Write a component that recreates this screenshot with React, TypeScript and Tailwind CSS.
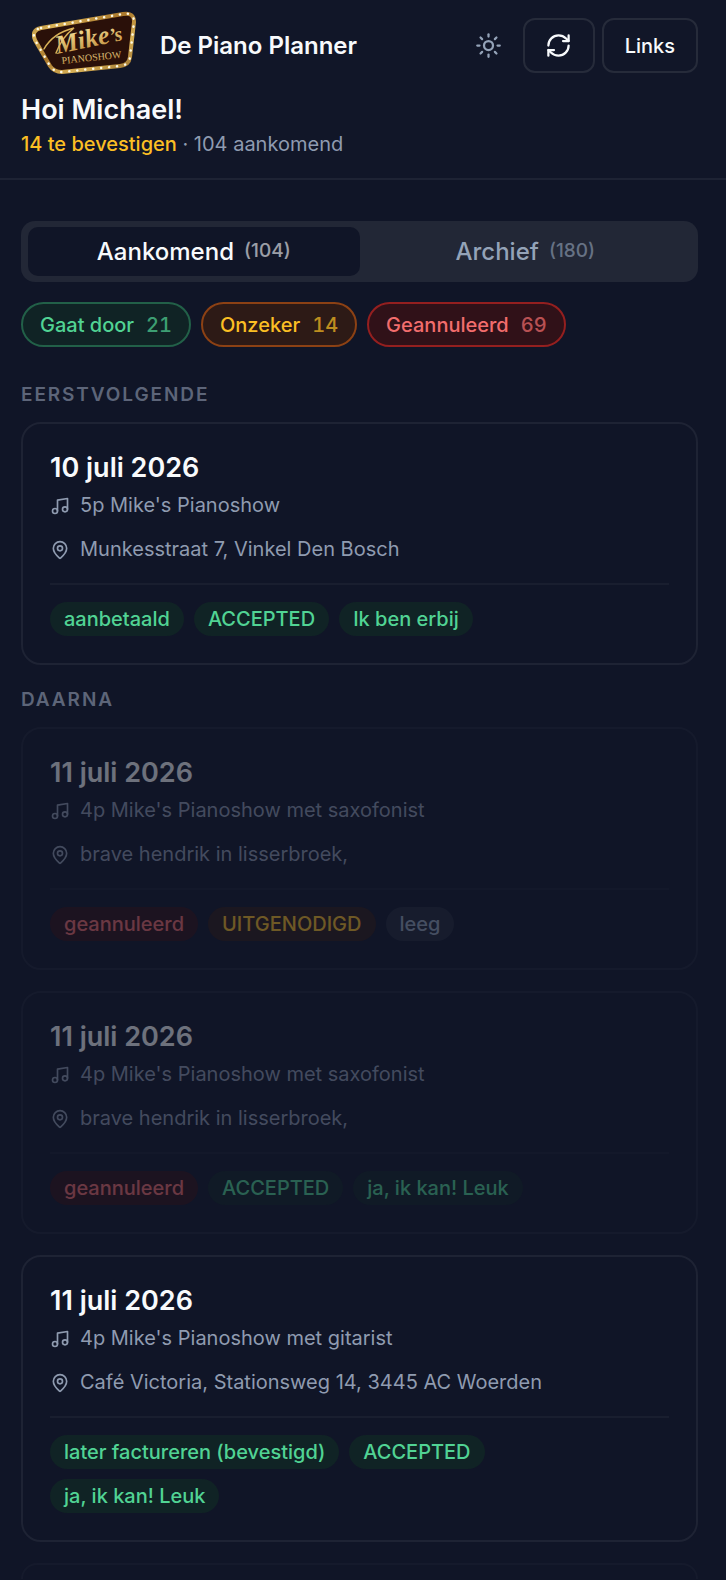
import React, { useState } from 'react'
import { MapPin, Music, RefreshCw, Sun } from 'lucide-react'
import { clsx } from 'clsx'

type Tone = 'green' | 'amber' | 'red' | 'gray'

interface Tag {
  label: string
  tone: Tone
}

interface Gig {
  id: number
  date: string
  show: string
  location: string
  tags: Tag[]
  cancelled?: boolean
}

const gigs: Gig[] = [
  {
    id: 1,
    date: '10 juli 2026',
    show: "5p Mike's Pianoshow",
    location: 'Munkesstraat 7, Vinkel Den Bosch',
    tags: [
      { label: 'aanbetaald', tone: 'green' },
      { label: 'ACCEPTED', tone: 'green' },
      { label: 'Ik ben erbij', tone: 'green' },
    ],
  },
  {
    id: 2,
    date: '11 juli 2026',
    show: "4p Mike's Pianoshow met saxofonist",
    location: 'brave hendrik in lisserbroek,',
    cancelled: true,
    tags: [
      { label: 'geannuleerd', tone: 'red' },
      { label: 'UITGENODIGD', tone: 'amber' },
      { label: 'leeg', tone: 'gray' },
    ],
  },
  {
    id: 3,
    date: '11 juli 2026',
    show: "4p Mike's Pianoshow met saxofonist",
    location: 'brave hendrik in lisserbroek,',
    cancelled: true,
    tags: [
      { label: 'geannuleerd', tone: 'red' },
      { label: 'ACCEPTED', tone: 'green' },
      { label: 'ja, ik kan! Leuk', tone: 'green' },
    ],
  },
  {
    id: 4,
    date: '11 juli 2026',
    show: "4p Mike's Pianoshow met gitarist",
    location: 'Café Victoria, Stationsweg 14, 3445 AC Woerden',
    tags: [
      { label: 'later factureren (bevestigd)', tone: 'green' },
      { label: 'ACCEPTED', tone: 'green' },
      { label: 'ja, ik kan! Leuk', tone: 'green' },
    ],
  },
]

const tagTones: Record<Tone, string> = {
  green: 'bg-[#102325] text-[#51d394]',
  amber: 'bg-[#2d1a16] text-[#fbbf24]',
  red: 'bg-[#301118] text-[#f26d6d]',
  gray: 'bg-[#222838] text-[#94a3b8]',
}

const filters = [
  { label: 'Gaat door', count: 21, style: 'border-[#226048] bg-[#102325] text-[#51d394]' },
  { label: 'Onzeker', count: 14, style: 'border-[#8c4114] bg-[#2d1a16] text-[#fbbf24]' },
  { label: 'Geannuleerd', count: 69, style: 'border-[#941f1f] bg-[#301118] text-[#f26d6d]' },
]

const tabs = [
  { id: 'upcoming', label: 'Aankomend', count: 104 },
  { id: 'archive', label: 'Archief', count: 180 },
]

const signShape = 'M9 17 L91 3 Q102 1 102 11 L98 46 Q97 54 88 55 L30 61 Q22 61 18 55 L3 29 Q-1 19 9 17 Z'

function Logo() {
  return (
    <svg width="104" height="69" viewBox="0 0 104 69" role="img" aria-label="Mike's Pianoshow">
      <defs>
        <linearGradient id="gold" x1="0" y1="0" x2="1" y2="1">
          <stop offset="0" stopColor="#8a6425" />
          <stop offset="0.2" stopColor="#d9b257" />
          <stop offset="0.45" stopColor="#a9772b" />
          <stop offset="0.7" stopColor="#d9b257" />
          <stop offset="1" stopColor="#94692a" />
        </linearGradient>
        <linearGradient id="letters" x1="0" y1="0" x2="0" y2="1">
          <stop offset="0" stopColor="#f8e7a0" />
          <stop offset="1" stopColor="#c08b38" />
        </linearGradient>
      </defs>
      <path d={signShape} fill="#2a1009" stroke="url(#gold)" strokeWidth="4" />
      <path d={signShape} fill="none" stroke="#fffbe8" strokeWidth="2.5" strokeLinecap="round" strokeDasharray="0.1 7.9" />
      {/* swash that leads into the name */}
      <path d="M12 38 Q21 22 42 17 Q30 26 24 42" fill="none" stroke="#d9b257" strokeWidth="1.5" strokeLinecap="round" />
      <text transform="rotate(-12 25 43)" x="25" y="43" fontSize="26" fontStyle="italic" fill="url(#letters)" className="font-['Liberation_Serif',serif]">
        Mike<tspan fontSize="20">’s</tspan>
      </text>
      <text transform="rotate(-6 30 53)" x="30" y="53" fontSize="10" fontWeight="400" fill="url(#letters)" className="font-['Liberation_Serif',serif]">
        PIANOSHOW
      </text>
    </svg>
  )
}

function GigCard({ gig }: { gig: Gig }) {
  return (
    <article
      className={clsx('rounded-[20px] border-2 border-[#1e2334] bg-[#101527] p-[27px]', gig.cancelled && 'opacity-40')}
    >
      <h3 className="text-[27px] leading-[34px] font-semibold text-[#f8fafc]">{gig.date}</h3>
      <p className="mt-[6px] flex items-center gap-[10px] leading-[29px]">
        <Music className="size-[20px] shrink-0" strokeWidth={2} />
        {gig.show}
      </p>
      <p className="mt-[15px] flex items-center gap-[10px] leading-[29px]">
        <MapPin className="size-[20px] shrink-0" strokeWidth={2} />
        {gig.location}
      </p>
      <div className="mt-[19px] flex flex-wrap gap-[10px] border-t-2 border-[#191e2f] pt-[17px] pr-5">
        {gig.tags.map((tag) => (
          <span key={tag.label} className={clsx('rounded-full px-[14px] leading-[34px] font-medium', tagTones[tag.tone])}>
            {tag.label}
          </span>
        ))}
      </div>
    </article>
  )
}

function SectionTitle({ children }: { children: React.ReactNode }) {
  return <h2 className="mb-[13px] text-[19px] leading-[28px] font-semibold tracking-widest text-[#5d6579] uppercase">{children}</h2>
}

export default function App() {
  const [tab, setTab] = useState('upcoming')
  const [next, ...later] = gigs

  return (
    <div className="min-h-screen bg-[#101527] font-['Inter',sans-serif] text-[20px] text-[#8f9bb0]">
      <header className="border-b-2 border-[#1e2334] bg-[#111628] pt-[11px] pr-7 pb-[19px] pl-[21px]">
        <div className="flex items-center">
          <a href="#" className="ml-[11px] flex items-center gap-6 text-[24px] font-semibold text-[#f8fafc]">
            <Logo />
            De Piano Planner
          </a>
          <div className="ml-auto flex items-center gap-[7px] text-[#f8fafc]">
            <button type="button" aria-label="Thema" className="flex size-[55px] items-center justify-center text-[#94a3b8]">
              <Sun className="size-[27px]" />
            </button>
            <button type="button" aria-label="Vernieuwen" className="flex h-[55px] w-[72px] items-center justify-center rounded-[12px] border-2 border-[#262b3a]">
              <RefreshCw className="size-[27px]" />
            </button>
            <button type="button" className="h-[55px] rounded-[12px] border-2 border-[#262b3a] px-[21px] font-medium">
              Links
            </button>
          </div>
        </div>
        <h1 className="mt-[13px] text-[27px] leading-[34px] font-semibold text-[#f8fafc]">Hoi Michael!</h1>
        <p className="mt-[3px] leading-[29px]">
          <span className="font-medium text-[#fbbf24]">14 te bevestigen</span> · 104 aankomend
        </p>
      </header>

      <main className="pt-[41px] pr-7 pl-[21px]">
        <div role="tablist" className="grid grid-cols-2 rounded-[14px] bg-[#222736] px-[7px] py-[6px]">
          {tabs.map((t) => (
            <button
              key={t.id}
              type="button"
              role="tab"
              aria-selected={tab === t.id}
              onClick={() => setTab(t.id)}
              className={clsx(
                'flex h-[49px] items-center justify-center gap-[10px] rounded-[10px] text-[24px] font-medium',
                tab === t.id ? 'bg-[#101527] text-[#f8fafc]' : 'text-[#94a3b8]',
              )}
            >
              {t.label}
              <span className="text-[19px] opacity-60">({t.count})</span>
            </button>
          ))}
        </div>

        <div className="mt-5 flex flex-wrap gap-[10px]">
          {filters.map((f) => (
            <button key={f.label} type="button" className={clsx('flex h-[45px] items-center gap-3 rounded-full border-2 px-[17px] font-medium', f.style)}>
              {f.label}
              <span className="tabular-nums opacity-70">{f.count}</span>
            </button>
          ))}
        </div>

        <section className="mt-[34px]">
          <SectionTitle>Eerstvolgende</SectionTitle>
          <GigCard gig={next} />
        </section>

        <section className="mt-[21px]">
          <SectionTitle>Daarna</SectionTitle>
          <div className="space-y-[21px]">
            {later.map((gig) => (
              <GigCard key={gig.id} gig={gig} />
            ))}
            <div className="h-4 rounded-t-[20px] border-2 border-b-0 border-[#1e2334] opacity-40" />
          </div>
        </section>
      </main>
    </div>
  )
}
